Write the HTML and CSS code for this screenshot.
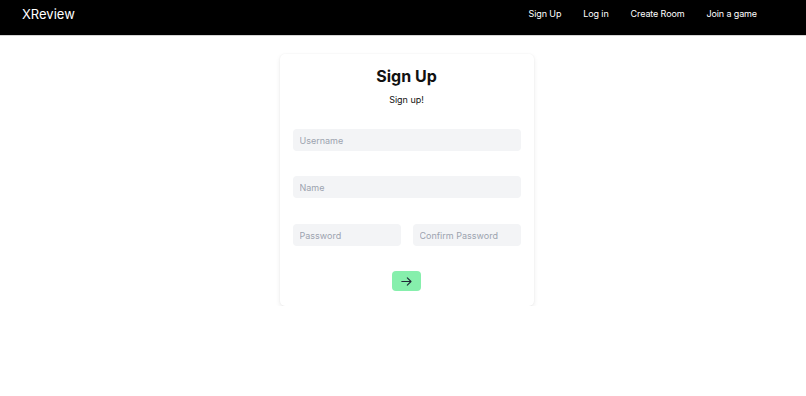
FILE: index.html
```html
<!DOCTYPE html>
<html lang="en">
<head>
    <meta charset="UTF-8">
    <meta name="viewport" content="width=device-width, initial-scale=1.0">
    <title>XReview - Sign Up</title>
    <link rel="stylesheet" href="styles.css">
</head>
<body>
    <header class="topbar">
        <a class="logo" href="#">XReview</a>
        <nav class="nav">
            <a href="#">Sign Up</a>
            <a href="#">Log in</a>
            <a href="#">Create Room</a>
            <a href="#">Join a game</a>
        </nav>
    </header>

    <main class="page">
        <form class="card" id="signupForm">
            <h1>Sign Up</h1>
            <p class="subtitle">Sign up!</p>

            <input type="text" class="field" placeholder="Username">
            <input type="text" class="field name" placeholder="Name">
            <div class="row">
                <input type="password" class="field" placeholder="Password">
                <input type="password" class="field" placeholder="Confirm Password">
            </div>

            <button type="button" class="submit">
                <svg width="11" height="9" viewBox="0 0 11 9" fill="none" stroke="#1f2937" stroke-width="1.1" stroke-linecap="round" stroke-linejoin="round">
                    <path d="M0.8 4.5h9.2M6.3 0.9l3.7 3.6-3.7 3.6"/>
                </svg>
            </button>
        </form>
    </main>
</body>
</html>
```

FILE: styles.css
```css
* {
    box-sizing: border-box;
}
body {
    margin: 0;
    font-family: Inter, "Noto Sans", sans-serif;
    background: #fff;
    color: #111;
}
.topbar {
    height: 36px;
    background: #000;
    border-bottom: 1px solid #d4d4d4;
    display: flex;
    justify-content: space-between;
    align-items: flex-start;
    padding: 5px 49px 0 22px;
}
.logo {
    color: #fff;
    text-decoration: none;
    font-size: 13px;
    line-height: 18px;
}
.nav {
    display: flex;
    gap: 22px;
    padding-top: 2px;
}
.nav a {
    color: #fff;
    text-decoration: none;
    font-size: 9px;
    letter-spacing: -0.12px;
    line-height: 14px;
}
.page {
    display: flex;
    justify-content: center;
    padding-top: 18px;
    padding-left: 7px;
}
.card {
    width: 254px;
    background: #fff;
    border-radius: 5px;
    box-shadow: 0 2px 5px rgba(0,0,0,0.08), 0 0 2px rgba(0,0,0,0.06);
    padding: 8px 13px 15px;
    display: flex;
    flex-direction: column;
}
h1 {
    margin: 0;
    text-align: center;
    font-size: 16px;
    font-weight: 700;
    line-height: 28px;
}
.subtitle {
    margin: 1px 0 20px;
    text-align: center;
    font-size: 9px;
    line-height: 18px;
}
.field {
    height: 22px;
    width: 100%;
    border: none;
    border-radius: 4px;
    background: #f3f4f6;
    padding: 0 7px;
    font-family: inherit;
    font-size: 9px;
    color: #111;
    margin-bottom: 25px;
}
.field.name {
    margin-bottom: 26px;
}
.field::placeholder {
    color: #9ca3af;
}
.row {
    display: flex;
    gap: 12px;
}
.row .field {
    flex: 1;
    min-width: 0;
}
.submit {
    align-self: center;
    width: 29px;
    height: 20px;
    border: none;
    border-radius: 4px;
    background: #86efac;
    display: flex;
    align-items: center;
    justify-content: center;
    padding: 0;
}
```
